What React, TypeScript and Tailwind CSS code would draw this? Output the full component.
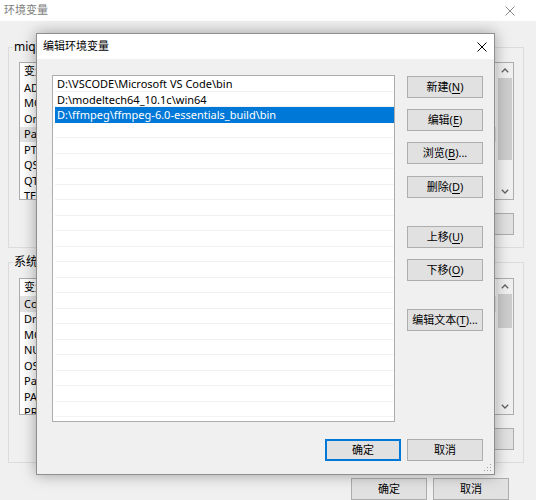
import clsx from "clsx";

const font = "font-['Noto_Sans','Noto_Sans_CJK_SC',sans-serif]";

const Close = ({ color }: { color: string }) => (
  <svg width="10" height="10" viewBox="0 0 10 10">
    <path d="M0.5 0.5 L9.5 9.5 M9.5 0.5 L0.5 9.5" stroke={color} strokeWidth="1" />
  </svg>
);

const Chevron = ({ up }: { up?: boolean }) => (
  <svg width="8" height="5" viewBox="0 0 8 5">
    <path
      d={up ? "M0.8 4.2 L4 1 L7.2 4.2" : "M0.8 0.8 L4 4 L7.2 0.8"}
      stroke="#606060"
      strokeWidth="1.3"
      fill="none"
    />
  </svg>
);

// button label: text before the mnemonic, the key, and what follows
const Btn = ({
  pre,
  k,
  post = ")",
  w = "w-[76px]",
  focus,
}: {
  pre: string;
  k?: string;
  post?: string;
  w?: string;
  focus?: boolean;
}) => (
  <div
    className={clsx(
      "flex h-[22px] shrink-0 items-center justify-center bg-[#e1e1e1] text-[11px] text-black",
      w,
      focus
        ? "border border-[#0078d7] shadow-[inset_0_0_0_1px_#0078d7]"
        : "border border-[#adadad]"
    )}
  >
    {pre}
    {k && <span className="underline underline-offset-2">{k}</span>}
    {k && post}
  </div>
);

const Scrollbar = ({ thumb }: { thumb: string }) => (
  <div className="flex w-[17px] shrink-0 flex-col bg-[#f0f0f0]">
    <div className="flex h-[15px] items-center justify-center">
      <Chevron up />
    </div>
    <div className="flex-1">
      <div className={clsx("ml-[2px] mr-[1px] bg-[#cdcdcd]", thumb)} />
    </div>
    <div className="flex h-[16px] items-center justify-center">
      <Chevron />
    </div>
  </div>
);

// only the variable names show past the dialog, so the value column is left out
const VarList = ({
  rows,
  sel,
  height,
  thumb,
}: {
  rows: string[];
  sel: number;
  height: string;
  thumb: string;
}) => (
  <div className={clsx("flex border border-[#adadad] bg-white", height)}>
    <div className="min-w-0 flex-1 overflow-hidden text-[11px]">
      <div className="flex h-[17px] items-center pl-[4px]">变量</div>
      {rows.map((n, i) => (
        <div
          key={n}
          className={clsx(
            "flex h-[15.5px] items-center whitespace-nowrap pl-[4px]",
            i === sel && "bg-[#e5e5e5]"
          )}
        >
          {n}
        </div>
      ))}
    </div>
    <Scrollbar thumb={thumb} />
  </div>
);

const Group = ({
  label,
  className,
  children,
}: {
  label: string;
  className?: string;
  children: React.ReactNode;
}) => (
  <div
    className={clsx(
      "relative h-[201px] border border-[#dcdcdc] pl-[10px] pr-[9px]",
      className
    )}
  >
    <span className="absolute -top-[9px] left-[4px] bg-[#f0f0f0] px-[1px] text-[12px] leading-[16px]">
      {label}
    </span>
    {children}
  </div>
);

const userVars = [
  "ADSK_CLM_WPAD_PROXY_CHECK",
  "MOZ_PLUGIN_PATH",
  "OneDrive",
  "Path",
  "PTSMinstall",
  "QSYS_ROOTDIR",
  "QT_DEVICE_PIXEL_RATIO",
  "TEMP",
];

const sysVars = [
  "ComSpec",
  "DriverData",
  "MOZ_PLUGIN_PATH",
  "NUMBER_OF_PROCESSORS",
  "OS",
  "Path",
  "PATHEXT",
  "PROCESSOR_ARCHITECTURE",
];

const paths = [
  "D:\\VSCODE\\Microsoft VS Code\\bin",
  "D:\\modeltech64_10.1c\\win64",
  "D:\\ffmpeg\\ffmpeg-6.0-essentials_build\\bin",
];

const EditDialog = () => (
  <div className="absolute left-[36px] top-[33px] flex h-[442px] w-[459px] flex-col border border-[#8f8f8f] bg-[#f0f0f0] shadow-[0_0_14px_rgba(0,0,0,0.35)]">
    <div className="flex h-[25px] shrink-0 items-center justify-between bg-white pl-[6px] pr-[7px]">
      <span className="text-[11px] text-black">编辑环境变量</span>
      <Close color="#000" />
    </div>
    <div className="flex pl-[15px] pt-[16px]">
      <div className="h-[347px] w-[343px] overflow-hidden border border-[#adadad] bg-white text-[11px]">
        {Array.from({ length: 23 }, (_, i) => (
          <div
            key={i}
            className={clsx(
              "ml-[2px] h-[15.5px] whitespace-nowrap pl-[2px] leading-[15px]",
              i === 2
                ? "bg-[#0078d7] text-white"
                : "border-b border-[#f2f2f2] text-black"
            )}
          >
            {paths[i] ?? ""}
          </div>
        ))}
      </div>
      <div className="ml-[12px] flex flex-col pt-[1px]">
        <Btn pre="新建(" k="N" />
        <div className="mt-[11px]">
          <Btn pre="编辑(" k="E" />
        </div>
        <div className="mt-[11px]">
          <Btn pre="浏览(" k="B" post=")..." />
        </div>
        <div className="mt-[12px]">
          <Btn pre="删除(" k="D" />
        </div>
        <div className="mt-[28px]">
          <Btn pre="上移(" k="U" />
        </div>
        <div className="mt-[11px]">
          <Btn pre="下移(" k="O" />
        </div>
        <div className="mt-[28px]">
          <Btn pre="编辑文本(" k="T" post=")..." />
        </div>
      </div>
    </div>
    <div className="mt-[17px] flex justify-end gap-[6px] pr-[11px]">
      <Btn pre="确定" focus />
      <Btn pre="取消" />
    </div>
    {/* size grip */}
    <svg
      className="absolute bottom-[2px] right-[2px]"
      width="8"
      height="8"
      viewBox="0 0 8 8"
    >
      <rect x="6" y="0" width="1" height="1" fill="#a0a0a0" />
      <rect x="3" y="3" width="1" height="1" fill="#a0a0a0" />
      <rect x="6" y="3" width="1" height="1" fill="#a0a0a0" />
      <rect x="0" y="6" width="1" height="1" fill="#a0a0a0" />
      <rect x="3" y="6" width="1" height="1" fill="#a0a0a0" />
      <rect x="6" y="6" width="1" height="1" fill="#a0a0a0" />
    </svg>
  </div>
);

export default function App() {
  return (
    <div
      className={clsx(
        "relative h-[500px] w-[536px] overflow-hidden bg-[#f0f0f0] text-black",
        font
      )}
    >
      <div className="flex h-[21px] items-center justify-between bg-white pl-[4px] pr-[21px]">
        <span className="text-[11px] text-[#7d7d7d]">环境变量</span>
        <Close color="#8a8a8a" />
      </div>
      <div className="pl-[8px] pr-[12px]">
        <Group label="miqi 的用户变量(U)" className="mt-[26px] pt-[14px]">
          <VarList rows={userVars} sel={3} height="h-[138px]" thumb="h-[82px]" />
          <div className="mt-[13px] flex justify-end gap-[6px]">
            <Btn pre="新建(" k="N" post=")..." />
            <Btn pre="编辑(" k="E" post=")..." />
            <Btn pre="删除(" k="D" />
          </div>
        </Group>
        <Group label="系统变量(S)" className="mt-[14px] pt-[15px]">
          <VarList rows={sysVars} sel={0} height="h-[137px]" thumb="h-[34px]" />
          <div className="mt-[13px] flex justify-end gap-[6px]">
            <Btn pre="新建(" k="W" post=")..." />
            <Btn pre="编辑(" k="I" post=")..." />
            <Btn pre="删除(" k="L" />
          </div>
        </Group>
        <div className="mt-[15px] flex justify-end gap-[6px] pr-[15px]">
          <Btn pre="确定" />
          <Btn pre="取消" />
        </div>
      </div>
      <EditDialog />
    </div>
  );
}
